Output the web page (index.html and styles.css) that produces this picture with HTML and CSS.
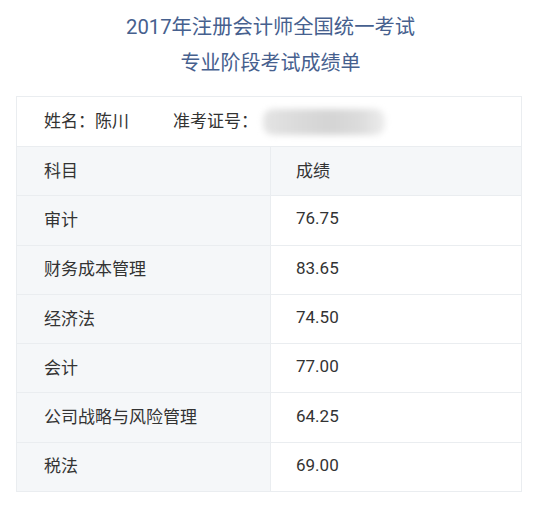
FILE: index.html
```html
<!DOCTYPE html>
<html lang="zh-CN">
<head>
<meta charset="utf-8">
<link rel="stylesheet" href="styles.css">
</head>
<body>
<header class="title">
  <div class="title-line one">2017年注册会计师全国统一考试</div>
  <div class="title-line two">专业阶段考试成绩单</div>
</header>
<div class="sheet">
  <div class="info-row">
    <span class="info-name">姓名：陈川</span>
    <span class="info-id">准考证号：</span>
    <span class="blur-wrap"><span class="blur"></span></span>
  </div>
  <div class="row head">
    <div class="cell subject">科目</div>
    <div class="cell score">成绩</div>
  </div>
  <div class="row">
    <div class="cell subject">审计</div>
    <div class="cell score">76.75</div>
  </div>
  <div class="row">
    <div class="cell subject">财务成本管理</div>
    <div class="cell score">83.65</div>
  </div>
  <div class="row">
    <div class="cell subject">经济法</div>
    <div class="cell score">74.50</div>
  </div>
  <div class="row">
    <div class="cell subject">会计</div>
    <div class="cell score">77.00</div>
  </div>
  <div class="row">
    <div class="cell subject">公司战略与风险管理</div>
    <div class="cell score">64.25</div>
  </div>
  <div class="row">
    <div class="cell subject">税法</div>
    <div class="cell score">69.00</div>
  </div>
</div>
</body>
</html>
```
FILE: styles.css
```css
html, body {
  margin: 0;
  padding: 0;
  background: #ffffff;
}
body {
  font-family: Roboto, "Noto Sans CJK SC", sans-serif;
  color: #333333;
}
.title {
  padding-top: 9px;
  text-align: center;
  color: #46608e;
}
.title-line {
  height: 36px;
  line-height: 36px;
}
.title-line.one {
  font-size: 20.3px;
}
.title-line.two {
  font-size: 20px;
}
.sheet {
  margin: 15px 19px 0 16px;
  border: 1px solid #eaedf0;
  border-bottom: none;
}
.info-row {
  display: flex;
  align-items: center;
  height: 50px;
  box-sizing: border-box;
  padding-bottom: 4px;
  border-bottom: 1px solid #eaedf0;
  padding-left: 27px;
  font-size: 17px;
  background: #ffffff;
}
.info-name {
  width: 129px;
}
.info-id {
  width: 86px;
}
.blur-wrap {
  display: inline-block;
  position: relative;
  width: 130px;
  height: 30px;
}
.blur {
  position: absolute;
  left: 4px;
  top: 4px;
  width: 122px;
  height: 26px;
  border-radius: 10px;
  background: linear-gradient(90deg, #e4e4e4 0%, #dadada 30%, #d4d4d4 55%, #dcdcdc 80%, #ededed 100%);
  filter: blur(3px);
}
.row {
  display: flex;
  height: 48.3px;
  border-bottom: 1px solid #eaedf0;
  font-size: 17px;
}
.cell {
  display: flex;
  align-items: center;
  padding-bottom: 4px;
}
.subject {
  width: 226px;
  padding-left: 27px;
  background: #f5f7f9;
  border-right: 1px solid #eaedf0;
}
.score {
  flex: 1;
  padding-left: 25px;
  background: #ffffff;
}
.row.head .score {
  background: #f5f7f9;
}
```
